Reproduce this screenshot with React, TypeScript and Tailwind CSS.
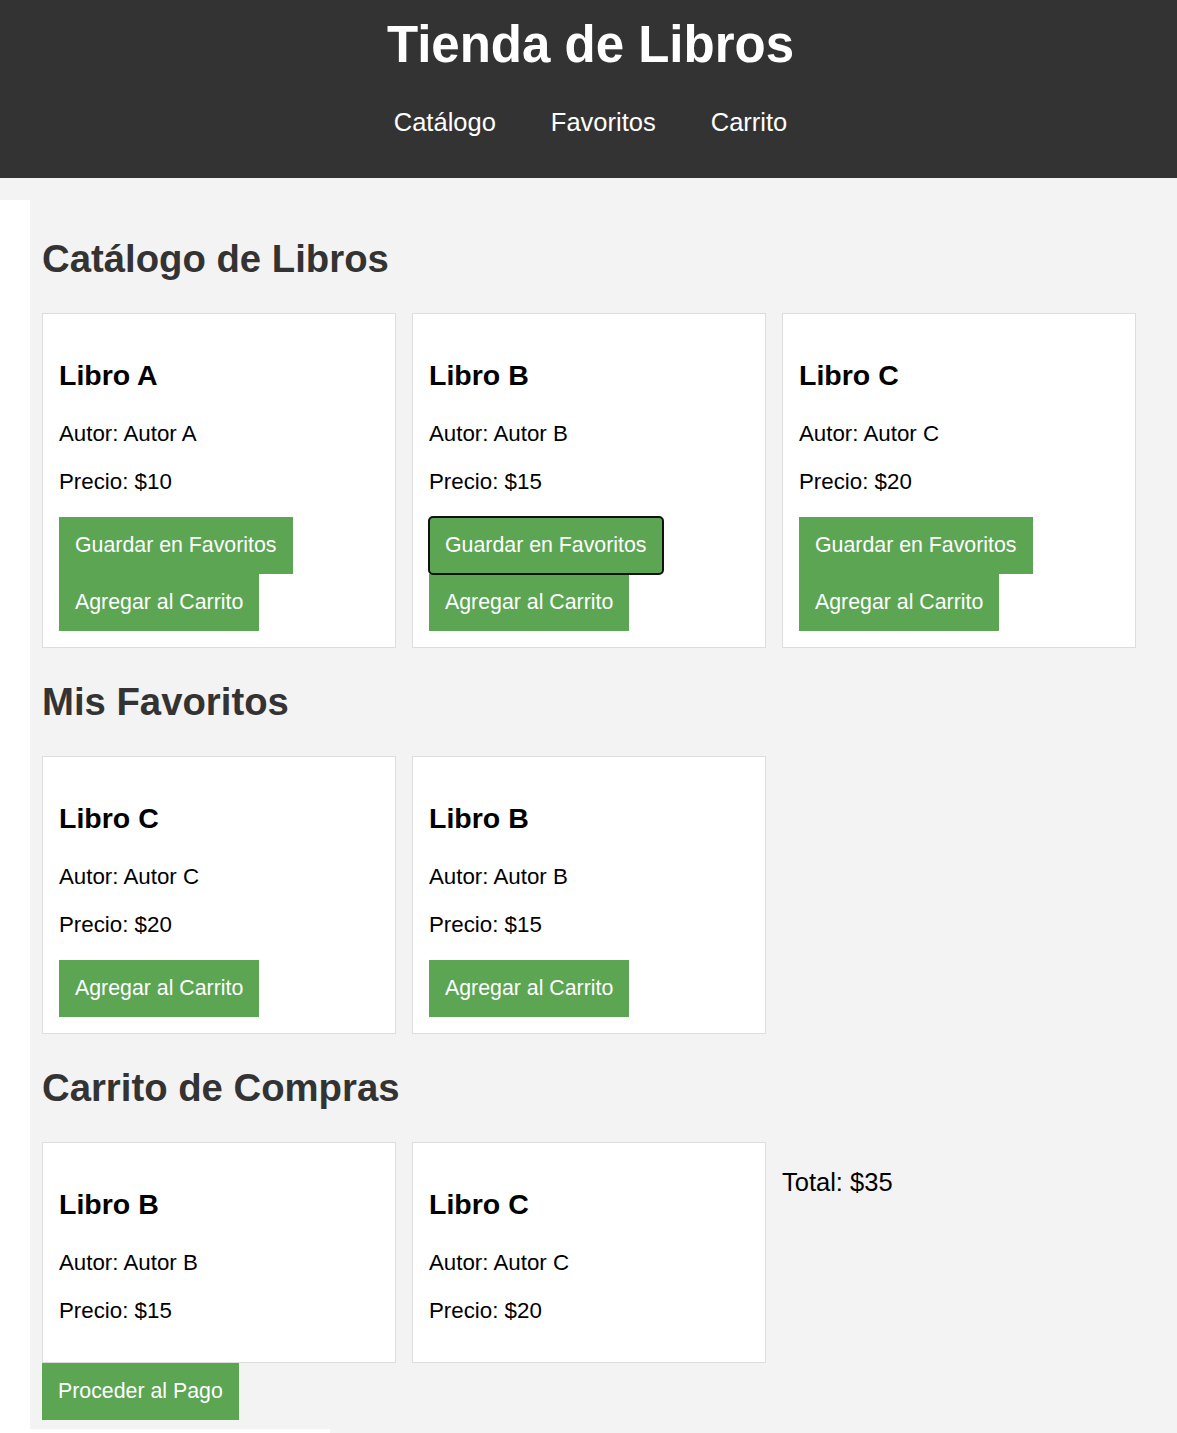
import React from "react";

type Book = { title: string; author: string; price: number };

const A: Book = { title: "Libro A", author: "Autor A", price: 10 };
const B: Book = { title: "Libro B", author: "Autor B", price: 15 };
const C: Book = { title: "Libro C", author: "Autor C", price: 20 };

function Btn({ label, focused }: { label: string; focused?: boolean }) {
  return (
    <button
      type="button"
      className={
        "block w-fit bg-[#5ca553] text-white text-[21.33px] leading-[25px] px-4 py-4 cursor-pointer " +
        (focused ? "rounded-[4px] outline-2 outline-[#111111] outline-offset-[-1px]" : "")
      }
    >
      {label}
    </button>
  );
}

function Card({
  book,
  buttons,
  focusedIndex,
}: {
  book: Book;
  buttons: string[];
  focusedIndex?: number;
}) {
  return (
    <div className="bg-white border border-[#dddddd] px-4 pt-4 pb-4 text-black">
      <h3 className="text-[28.5px] font-bold leading-[33px] mt-[29px] mb-[29px]">{book.title}</h3>
      <p className="text-[22.3px] leading-[25px] mb-[23px]">Autor: {book.author}</p>
      <p className="text-[22.3px] leading-[25px] mb-[23px]">Precio: ${book.price}</p>
      {buttons.map((b, i) => (
        <Btn key={b} label={b} focused={focusedIndex === i} />
      ))}
    </div>
  );
}

export default function App() {
  const catalogBtns = ["Guardar en Favoritos", "Agregar al Carrito"];
  return (
    <div
      className="bg-white min-h-screen"
      style={{ fontFamily: '"Liberation Sans", Arial, sans-serif' }}
    >
      <header className="bg-[#333333] h-[178px] pt-[16px] pl-[4px] text-white text-center">
        <h1 className="text-[51px] font-bold leading-[58px]">Tienda de Libros</h1>
        <nav className="mt-[34px] flex justify-center gap-[55px] text-[25.5px] leading-[29px]">
          <a href="#catalogo">Catálogo</a>
          <a href="#favoritos">Favoritos</a>
          <a href="#carrito">Carrito</a>
        </nav>
      </header>
      <div className="bg-[#f3f3f3] h-[22px]" />
      <div className="flex">
        <div className="w-[30px] bg-white shrink-0" />
        <main className="flex-1 bg-[#f3f3f3] pl-[12px] pr-[41px] pb-[9px]">
          <section id="catalogo">
            <h2 className="text-[38.3px] font-bold leading-[44px] text-[#333333] mt-[37px] mb-[32px]">
              Catálogo de Libros
            </h2>
            <div className="grid grid-cols-3 gap-4">
              <Card book={A} buttons={catalogBtns} />
              <Card book={B} buttons={catalogBtns} focusedIndex={0} />
              <Card book={C} buttons={catalogBtns} />
            </div>
          </section>
          <section id="favoritos">
            <h2 className="text-[38.3px] font-bold leading-[44px] text-[#333333] mt-[32px] mb-[32px]">
              Mis Favoritos
            </h2>
            <div className="grid grid-cols-3 gap-4">
              <Card book={C} buttons={["Agregar al Carrito"]} />
              <Card book={B} buttons={["Agregar al Carrito"]} />
            </div>
          </section>
          <section id="carrito">
            <h2 className="text-[38.3px] font-bold leading-[44px] text-[#333333] mt-[32px] mb-[32px]">
              Carrito de Compras
            </h2>
            <div className="grid grid-cols-3 gap-4 items-start">
              <Card book={B} buttons={[]} />
              <Card book={C} buttons={[]} />
              <p className="text-[25.5px] leading-[28px] mt-[26px] text-black">Total: $35</p>
            </div>
            <Btn label="Proceder al Pago" />
          </section>
        </main>
      </div>
      <div className="flex h-[20px]">
        <div className="w-[330px] bg-white" />
        <div className="flex-1 bg-[#f3f3f3]" />
      </div>
    </div>
  );
}
